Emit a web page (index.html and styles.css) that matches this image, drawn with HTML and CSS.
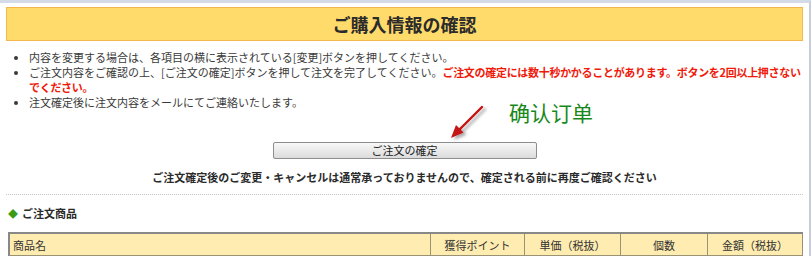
FILE: index.html
```html
<!DOCTYPE html>
<html lang="ja">
<head>
    <meta charset="UTF-8">
    <meta name="viewport" content="width=device-width, initial-scale=1.0">
    <title>ご購入情報の確認</title>
    <link rel="stylesheet" href="styles.css">
</head>
<body>
    <div class="page">
        <h1 class="heading">ご購入情報の確認</h1>
        <ul class="notes">
            <li>内容を変更する場合は、各項目の横に表示されている[変更]ボタンを押してください。</li>
            <li>ご注文内容をご確認の上、[ご注文の確定]ボタンを押して注文を完了してください。<span class="warn">ご注文の確定には数十秒かかることがあります。ボタンを2回以上押さないでください。</span></li>
            <li>注文確定後に注文内容をメールにてご連絡いたします。</li>
        </ul>
        <div class="confirm">
            <!-- 注釈: 矢印と中国語のラベル -->
            <svg class="arrow" width="50" height="46" viewBox="0 0 50 46">
                <defs>
                    <filter id="shadow" x="-30%" y="-30%" width="160%" height="160%">
                        <feDropShadow dx="3" dy="2" stdDeviation="1.5" flood-color="#000" flood-opacity="0.35"/>
                    </filter>
                </defs>
                <g filter="url(#shadow)">
                    <line x1="42" y1="7" x2="19" y2="30" stroke="#c41212" stroke-width="2.4" stroke-linecap="round"/>
                    <polygon points="11,38 23.5,32.5 16,25" fill="#c41212"/>
                </g>
            </svg>
            <span class="label">确认订单</span>
            <button class="confirm-btn">ご注文の確定</button>
            <p class="confirm-note">ご注文確定後のご変更・キャンセルは通常承っておりませんので、確定される前に再度ご確認ください</p>
        </div>
        <div class="divider"></div>
        <h2 class="section-title">ご注文商品</h2>
        <table class="items">
            <tr>
                <th class="name">商品名</th>
                <th class="col-point">獲得ポイント</th>
                <th class="col-price">単価（税抜）</th>
                <th class="col-qty">個数</th>
                <th class="col-sum">金額（税抜）</th>
            </tr>
        </table>
    </div>
</body>
</html>
```

FILE: styles.css
```css
body {
    margin: 0;
    background: #fff;
    font-family: "Noto Sans CJK JP", sans-serif;
    font-size: 11px;
    color: #333;
}
.page {
    width: 797px;
    padding: 4px 6px 0 6px;
    border-top: 3px solid #d3dbe6;
    border-right: 2px solid #c6ced9;
    height: 260px;
    overflow: hidden;
}
.heading {
    margin: 0;
    height: 32px;
    line-height: 32px;
    background: #ffdb6c;
    border: 1px solid #f2b84e;
    text-align: center;
    font-size: 18px;
    font-weight: bold;
    color: #2b2b2b;
}
.notes {
    margin: 9px 0 0;
    padding-left: 23px;
    line-height: 15px;
    color: #3a3a3a;
}
.warn {
    color: #f01a0a;
    font-weight: bold;
    letter-spacing: -0.3px;
}
.confirm {
    position: relative;
    padding-top: 32px;
    text-align: center;
}
.arrow {
    position: absolute;
    left: 434px;
    top: -10px;
}
.label {
    position: absolute;
    left: 503px;
    top: -11px;
    font-family: "Noto Sans CJK SC", sans-serif;
    font-size: 21px;
    line-height: 26px;
    color: #17881a;
}
.confirm-btn {
    display: block;
    margin: 0 auto;
    width: 264px;
    height: 17px;
    padding: 0;
    font-family: "Noto Sans CJK JP", sans-serif;
    font-size: 11px;
    line-height: 15px;
    color: #222;
    background: linear-gradient(#f8f8f8, #dcdcdc);
    border: 1px solid #8d8d8d;
    border-radius: 2px;
}
.confirm-note {
    margin: 11px 0 0;
    line-height: 15px;
    font-weight: bold;
    color: #2a2a2a;
}
.divider {
    margin-top: 9px;
    border-top: 1px dotted #c4c4c4;
}
.section-title {
    margin: 11px 0 0 2px;
    font-size: 11px;
    line-height: 15px;
    font-weight: bold;
    color: #2a2a2a;
}
.section-title::before {
    content: "◆";
    color: #3c9a16;
    font-size: 10px;
    margin-right: 4px;
}
.items {
    margin: 11px 0 0 2px;
    width: 795px;
    border-collapse: collapse;
    border-top: 2px solid #888;
    border-left: 2px solid #888;
}
.items th {
    height: 21px;
    padding: 0 4px;
    background: #ffecb0;
    border: 1px solid #9a9272;
    font-weight: normal;
    color: #333;
    text-align: center;
}
.items th.name {
    text-align: left;
    padding-left: 3px;
}
.col-point { width: 85px; }
.col-price { width: 87px; }
.col-qty { width: 78px; }
.col-sum { width: 86px; }
```
